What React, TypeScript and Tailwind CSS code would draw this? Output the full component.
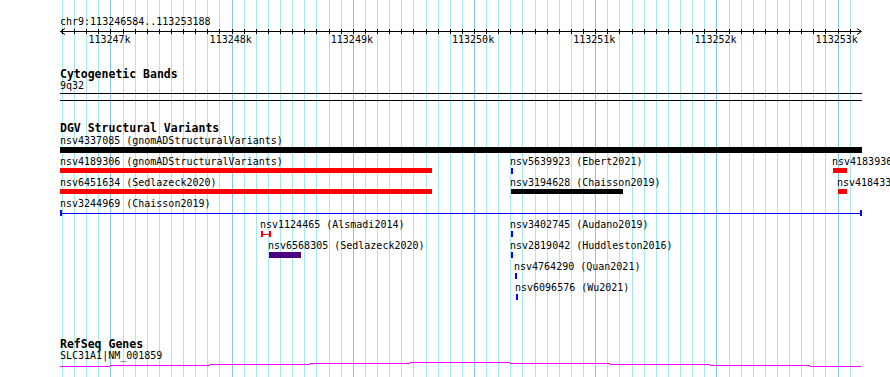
const START = 113246584;
const END = 113253188;
const PX = 0.1212;
const toX = (bp: number) => 60 + (bp - START) * PX;

const ticks: number[] = [];
for (let bp = 113246600; bp <= END; bp += 100) ticks.push(bp);
const majors = ticks.filter((bp) => bp % 1000 === 0);

type Feature = {
  label: string;
  x: number; // px from track start
  w: number;
  h: number;
  kind: "bar" | "line" | "span";
  color: string;
};

// one array per layout row of the DGV track
const rows: Feature[][] = [
  [{ label: "nsv4337085 (gnomADStructuralVariants)", x: 0, w: 802, h: 6, kind: "bar", color: "#000000" }],
  [
    { label: "nsv4189306 (gnomADStructuralVariants)", x: 0, w: 372, h: 5, kind: "bar", color: "#ff0000" },
    { label: "nsv5639923 (Ebert2021)", x: 451, w: 2, h: 6, kind: "bar", color: "#0000ff" },
    { label: "nsv4183936 (gnomADStructuralVariants)", x: 773, w: 14, h: 5, kind: "bar", color: "#ff0000" },
  ],
  [
    { label: "nsv6451634 (Sedlazeck2020)", x: 0, w: 372, h: 5, kind: "bar", color: "#ff0000" },
    { label: "nsv3194628 (Chaisson2019)", x: 451, w: 112, h: 5, kind: "bar", color: "#000000" },
    { label: "nsv4184339 (gnomADStructuralVariants)", x: 778, w: 9, h: 5, kind: "bar", color: "#ff0000" },
  ],
  [{ label: "nsv3244969 (Chaisson2019)", x: 0, w: 802, h: 6, kind: "line", color: "#0000ff" }],
  [
    { label: "nsv1124465 (Alsmadi2014)", x: 201, w: 10, h: 6, kind: "span", color: "#ff0000" },
    { label: "nsv3402745 (Audano2019)", x: 451, w: 2, h: 6, kind: "bar", color: "#0000ff" },
  ],
  [
    { label: "nsv6568305 (Sedlazeck2020)", x: 209, w: 32, h: 6, kind: "bar", color: "#4b0082" },
    { label: "nsv2819042 (Huddleston2016)", x: 451, w: 2, h: 6, kind: "bar", color: "#0000ff" },
  ],
  [{ label: "nsv4764290 (Quan2021)", x: 455, w: 2, h: 6, kind: "bar", color: "#0000ff" }],
  [{ label: "nsv6096576 (Wu2021)", x: 456, w: 2, h: 6, kind: "bar", color: "#0000ff" }],
];

// coverage steps of the gene line: [x1, x2, y offset]
const steps: [number, number, number][] = [
  [60, 110, 4],
  [110, 210, 3],
  [210, 310, 2],
  [310, 410, 1],
  [410, 510, 0],
  [510, 610, 1],
  [610, 710, 2],
  [710, 810, 3],
  [810, 861, 4],
];

function Glyph({ f }: { f: Feature }) {
  if (f.kind === "line" || f.kind === "span") {
    return (
      <div className="flex items-center" style={{ width: f.w, height: f.h }}>
        <div className="h-[6px] w-[2px]" style={{ background: f.color }} />
        <div className="h-px flex-1" style={{ background: f.color }} />
        <div className="h-[6px] w-[2px]" style={{ background: f.color }} />
      </div>
    );
  }
  return <div style={{ width: f.w, height: f.h, background: f.color }} />;
}

function Track({ title, children }: { title: string; children: React.ReactNode }) {
  return (
    <div>
      <div className="text-[11.5px] font-bold leading-[12px]">{title}</div>
      {children}
    </div>
  );
}

export default function App() {
  return (
    <div className="relative h-[377px] w-[890px] overflow-hidden bg-white font-['DejaVu_Sans_Mono',monospace] text-[10px] leading-[12px] text-black">
      {/* grid */}
      <svg className="absolute inset-0" width={890} height={377} shapeRendering="crispEdges">
        {ticks.map((bp) => {
          const x = Math.round(toX(bp));
          return <rect key={bp} x={x} y={0} width={1} height={377} fill={bp % 1000 === 0 ? "#88c6e6" : "#a9e7ef"} />;
        })}
      </svg>

      <div className="relative flex flex-col pl-[60px] pt-[16px]">
        {/* ruler */}
        <div className="whitespace-pre">chr9:113246584..113253188</div>
        <div className="relative h-[18px] w-[803px]">
          <svg className="absolute left-0 top-0" width={803} height={8}>
            <line x1={0} x2={801} y1={3.5} y2={3.5} stroke="#000" strokeWidth={1} />
            <polyline points="5,0.5 0.5,3.5 5,6.5" fill="none" stroke="#000" strokeWidth={1} />
            <polyline points="797,0.5 801.5,3.5 797,6.5" fill="none" stroke="#000" strokeWidth={1} />
            {ticks.map((bp) => {
              const x = Math.round(toX(bp)) - 60 + 0.5;
              return <line key={bp} x1={x} x2={x} y1={1} y2={6} stroke="#000" strokeWidth={1} />;
            })}
          </svg>
          {majors.map((bp) => (
            <span key={bp} className="absolute top-[6px] whitespace-pre" style={{ left: toX(bp) - 60 - 22 }}>
              {Math.round(bp / 1000)}k
            </span>
          ))}
        </div>

        <div className="mt-[22px]">
          <Track title="Cytogenetic Bands">
            <div>9q32</div>
            <div className="mt-px h-[8px] w-[802px] border-y border-black" />
          </Track>
        </div>

        <div className="mt-[21px] h-[216px]">
          <Track title="DGV Structural Variants">
            <div className="flex w-[830px] flex-col pt-px">
              {rows.map((row, i) => (
                <div key={i} className="relative h-[21px]">
                  {row.map((f) => (
                    <div key={f.label} className="absolute top-0 flex flex-col" style={{ left: f.x === 0 ? 0 : f.x - 1 }}>
                      <span className="whitespace-pre">{f.label}</span>
                      <div className={f.x === 0 ? "" : "pl-px"}>
                        <Glyph f={f} />
                      </div>
                    </div>
                  ))}
                </div>
              ))}
            </div>
          </Track>
        </div>

        <Track title="RefSeq Genes">
          <div>SLC31A1|NM_001859</div>
          <div className="flex h-[8px] items-start">
            {steps.map(([x1, x2, dy]) => (
              <div key={x1} className="h-px bg-[#ff00ff]" style={{ width: x2 - x1, marginTop: dy }} />
            ))}
          </div>
        </Track>
      </div>
    </div>
  );
}
